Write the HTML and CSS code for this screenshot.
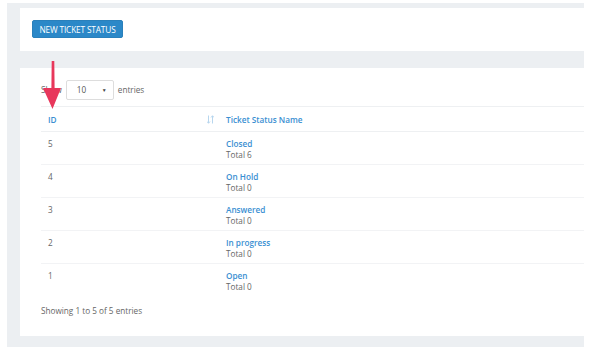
FILE: index.html
```html
<!DOCTYPE html>
<html>
<head>
<meta charset="utf-8">
<link rel="stylesheet" href="styles.css">
</head>
<body>
<div class="page">
  <div class="card top-card">
    <button class="btn">NEW TICKET STATUS</button>
  </div>
  <div class="card list-card">
    <div class="length">
      <span>Show</span>
      <span class="select"><span>10</span><span class="caret">▼</span></span>
      <span>entries</span>
    </div>
    <table class="tbl">
      <thead>
        <tr><th class="c-id">ID<svg class="sort" width="7" height="9" viewBox="0 0 7 9"><path d="M1.5 0.5 V8 M0 6.5 L1.5 8.3 L3 6.5 M5.5 8.5 V1 M4 2.5 L5.5 0.7 L7 2.5" stroke="#b7d6ee" stroke-width="1" fill="none"/></svg></th><th>Ticket Status Name</th></tr>
      </thead>
      <tbody>
        <tr><td class="c-id">5</td><td><a class="lnk">Closed</a><div>Total 6</div></td></tr>
        <tr><td class="c-id">4</td><td><a class="lnk">On Hold</a><div>Total 0</div></td></tr>
        <tr><td class="c-id">3</td><td><a class="lnk">Answered</a><div>Total 0</div></td></tr>
        <tr><td class="c-id">2</td><td><a class="lnk">In progress</a><div>Total 0</div></td></tr>
        <tr class="last"><td class="c-id">1</td><td><a class="lnk">Open</a><div>Total 0</div></td></tr>
      </tbody>
    </table>
    <div class="info">Showing 1 to 5 of 5 entries</div>
    <svg class="arrow" width="24" height="50" viewBox="0 0 24 50">
      <path d="M9.7 0 L12.3 0 L12.6 27 L19 27 L10.5 48 L1 27 L9.4 27 Z" fill="#e8375b"/>
    </svg>
  </div>
</div>
</body>
</html>
```
FILE: styles.css
```css
html, body {
  margin: 0;
  padding: 0;
  background: #ffffff;
  font-family: "Open Sans", "Noto Sans", sans-serif;
  font-size: 8.2px;
  color: #666;
}
.page {
  margin: 3px 0 0 7px;
  width: 577px;
  height: 344px;
  padding: 5px 0 0 13px;
  box-sizing: border-box;
  background: #eceff2;
  display: flex;
  flex-direction: column;
  gap: 17px;
}
.card {
  background: #fff;
}
.top-card {
  height: 43px;
  padding: 12px 0 0 12px;
  box-sizing: border-box;
}
.btn {
  width: 91px;
  height: 18px;
  background: #2b88c8;
  border: 1px solid #2a80bb;
  border-radius: 2px;
  color: #fff;
  font-family: "Open Sans", sans-serif;
  font-size: 8.3px;
  padding: 0;
  letter-spacing: -0.15px;
}
.list-card {
  position: relative;
  height: 268px;
  padding: 12px 0 0 21px;
  box-sizing: border-box;
}
.length {
  display: flex;
  align-items: center;
  gap: 4px;
  height: 19px;
  color: #666;
}
.select {
  width: 48px;
  height: 20px;
  box-sizing: border-box;
  border: 1px solid #ddd;
  border-radius: 2px;
  display: flex;
  align-items: center;
  justify-content: space-between;
  padding: 0 6px 0 10px;
  color: #555;
}
.caret {
  font-size: 5px;
  color: #444;
}
.tbl {
  margin-top: 7px;
  width: 543px;
  border-collapse: collapse;
}
.tbl th, .tbl td {
  text-align: left;
  padding: 0 0 0 7px;
  vertical-align: top;
}
.tbl th {
  height: 24px;
  vertical-align: middle;
  color: #3a8fd2;
  font-weight: 600;
  border-top: 1px solid #eef0f2;
  border-bottom: 1px solid #eef0f2;
}
.c-id {
  width: 171px;
}
th.c-id {
  position: relative;
}
.sort {
  position: absolute;
  left: 166px;
  top: 8px;
}
.tbl td {
  height: 33px;
  padding-top: 6px;
  box-sizing: border-box;
  line-height: 11px;
  border-bottom: 1px solid #f2f3f5;
  color: #666;
}
.tbl tr.last td {
  border-bottom: none;
}
.lnk {
  color: #3a8fd2;
  font-weight: 600;
}
.info {
  margin-top: 8px;
  color: #666;
}
.arrow {
  position: absolute;
  left: 22px;
  top: -7px;
}
```
